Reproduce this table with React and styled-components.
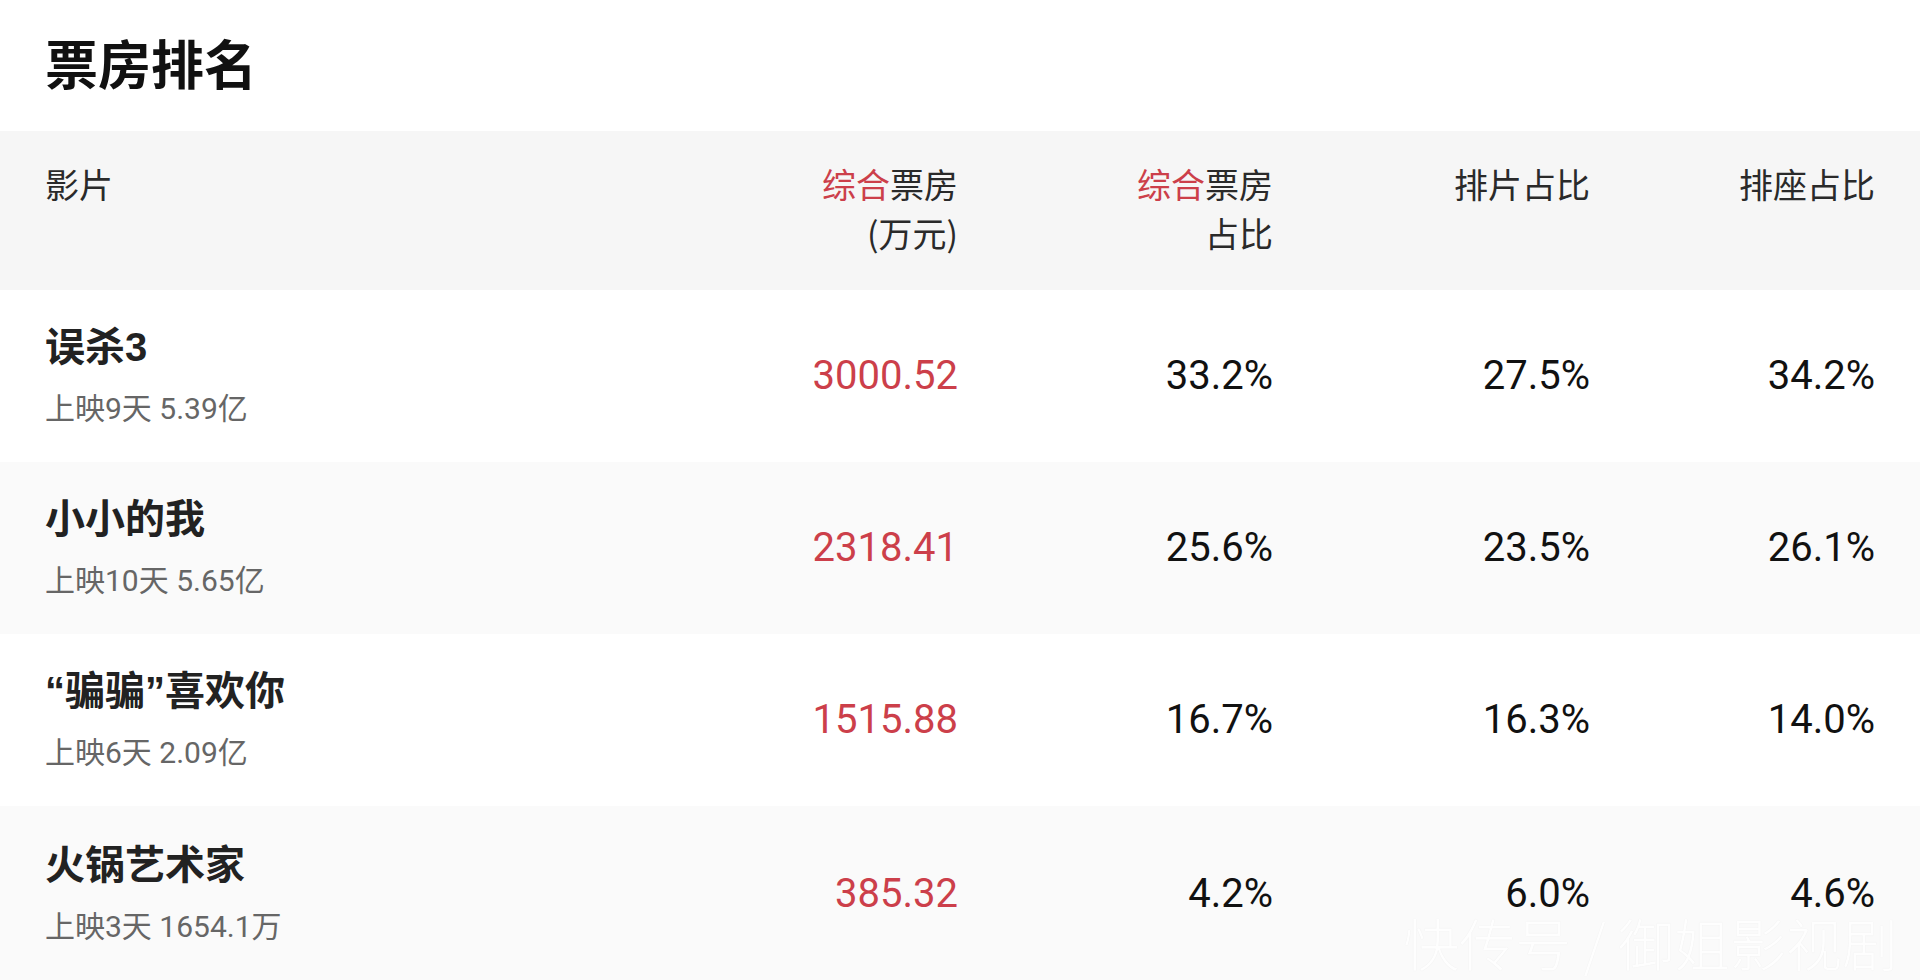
import React from "react";
import styled, { createGlobalStyle } from "styled-components";

const GlobalStyle = createGlobalStyle`
    html, body {
        margin: 0;
        padding: 0;
        background: #fff;
    }
    body {
        font-family: Roboto, "Noto Sans CJK SC", sans-serif;
        color: #111;
    }
`;

const movies = [
    { name: "误杀3", sub: "上映9天 5.39亿", box: "3000.52", share: "33.2%", shows: "27.5%", seats: "34.2%" },
    { name: "小小的我", sub: "上映10天 5.65亿", box: "2318.41", share: "25.6%", shows: "23.5%", seats: "26.1%" },
    { name: "“骗骗”喜欢你", sub: "上映6天 2.09亿", box: "1515.88", share: "16.7%", shows: "16.3%", seats: "14.0%" },
    { name: "火锅艺术家", sub: "上映3天 1654.1万", box: "385.32", share: "4.2%", shows: "6.0%", seats: "4.6%" },
];

function App() {
    return (
        <Page>
            <GlobalStyle />
            <TitleBar>
                <Title>票房排名</Title>
            </TitleBar>
            <HeadRow>
                <HeadCell>影片</HeadCell>
                <HeadCell $right>
                    <Red>综合</Red>票房
                    <br />
                    (万元)
                </HeadCell>
                <HeadCell $right>
                    <Red>综合</Red>票房
                    <br />
                    占比
                </HeadCell>
                <HeadCell $right>排片占比</HeadCell>
                <HeadCell $right>排座占比</HeadCell>
            </HeadRow>
            {movies.map((m, i) => (
                <Row key={m.name} $alt={i % 2 === 1} $last={i === movies.length - 1}>
                    <NameCell>
                        <Name>{m.name}</Name>
                        <Sub>{m.sub}</Sub>
                    </NameCell>
                    <Num $red>{m.box}</Num>
                    <Num>{m.share}</Num>
                    <Num>{m.shows}</Num>
                    <Num>{m.seats}</Num>
                </Row>
            ))}
            <Watermark>快传号 / 御姐影视剧</Watermark>
        </Page>
    );
}

const Page = styled.div`
    position: relative;
    width: 1920px;
    height: 980px;
    overflow: hidden;
    background: #fff;
`;

const TitleBar = styled.div`
    height: 131px;
    display: flex;
    align-items: center;
    padding: 0 45px 6px;
    box-sizing: border-box;
`;

const Title = styled.h1`
    margin: 0;
    font-family: "Noto Sans CJK SC", sans-serif;
    font-size: 53px;
    font-weight: 700;
    color: #111;
    line-height: 1.2;
`;

const Grid = styled.div`
    display: grid;
    grid-template-columns: 1fr 300px 315px 317px 285px;
    padding: 0 45px;
    box-sizing: border-box;
`;

const HeadRow = styled(Grid)`
    height: 159px;
    background: #f6f6f6;
    padding-top: 28px;
    align-items: start;
`;

const HeadCell = styled.div`
    font-family: "Noto Sans CJK SC", sans-serif;
    font-size: 34px;
    line-height: 49px;
    color: #2a2a2a;
    text-align: ${(p) => (p.$right ? "right" : "left")};
`;

const Red = styled.span`
    color: #cc3f4a;
`;

const Row = styled(Grid)`
    height: ${(p) => (p.$last ? "175px" : "172px")};
    background: ${(p) => (p.$alt ? "#fafafa" : "#fff")};
    align-items: center;
`;

const NameCell = styled.div`
    display: flex;
    flex-direction: column;
    gap: 18px;
`;

const Name = styled.div`
    font-family: "Liberation Sans", "Noto Sans CJK SC", sans-serif;
    font-size: 40px;
    font-weight: 700;
    line-height: 48px;
    color: #222;
`;

const Sub = styled.div`
    font-family: Roboto, "Noto Sans CJK SC", sans-serif;
    font-size: 30px;
    line-height: 40px;
    color: #666;
`;

const Num = styled.div`
    font-family: Roboto, sans-serif;
    font-size: 40px;
    line-height: 40px;
    text-align: right;
    color: ${(p) => (p.$red ? "#cc3f4a" : "#111")};
`;

const Watermark = styled.div`
    position: absolute;
    right: 22px;
    bottom: 10px;
    font-family: "Noto Sans CJK SC", sans-serif;
    font-size: 56px;
    line-height: 1;
    font-weight: 300;
    color: rgba(255, 255, 255, 0.95);
    text-shadow: 0 0 1px rgba(0, 0, 0, 0.08);
    white-space: pre;
`;

export default App;
